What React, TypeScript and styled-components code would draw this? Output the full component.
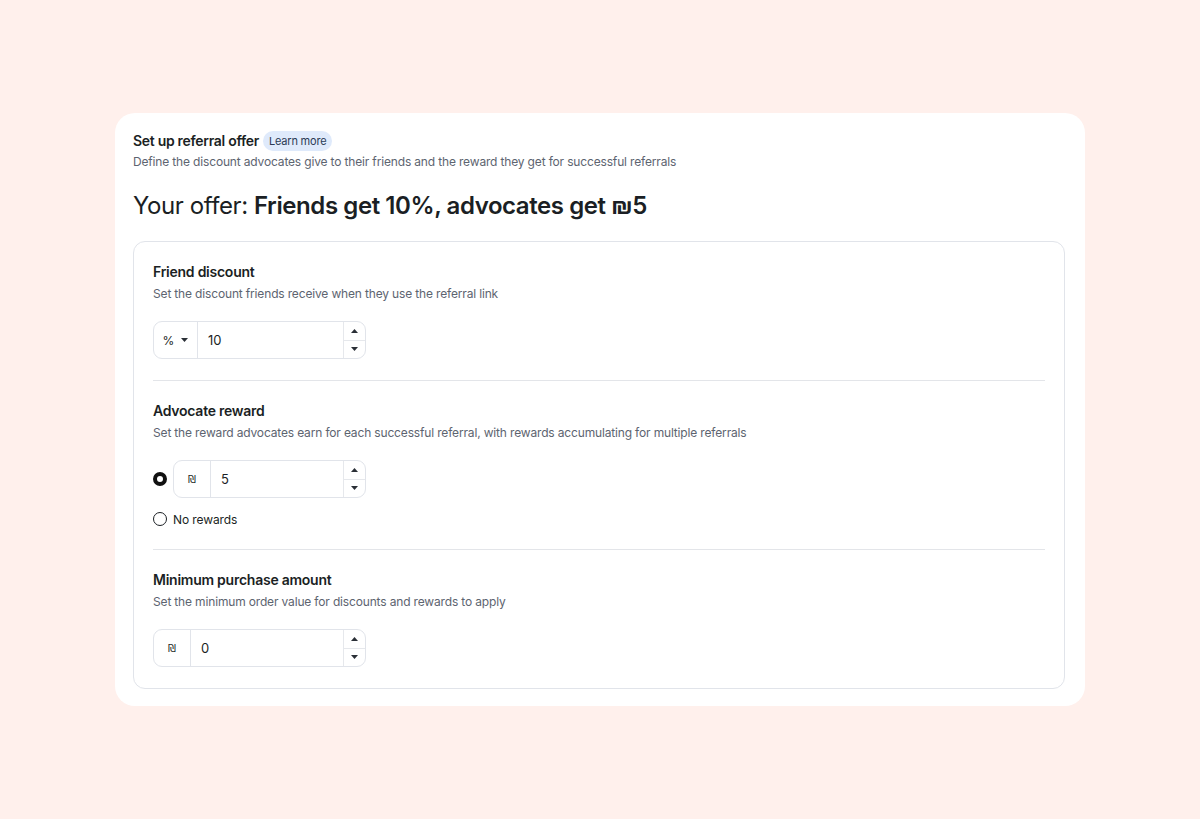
import React from "react";
import styled, { createGlobalStyle } from "styled-components";

const Global = createGlobalStyle`
  html, body { margin: 0; padding: 0; }
  body {
    background: #fff0ec;
    font-family: Inter, "Noto Sans", sans-serif;
    color: #1b1f24;
    -webkit-font-smoothing: antialiased;
  }
`;

const Page = styled.div`
  width: 1200px;
  height: 819px;
  display: flex;
  justify-content: center;
  padding-top: 113px;
  box-sizing: border-box;
`;

const Card = styled.div`
  width: 970px;
  height: 593px;
  box-sizing: border-box;
  background: #fff;
  border-radius: 20px;
  padding: 18px 20px 18px 18px;
  display: flex;
  flex-direction: column;
`;

const TitleRow = styled.div`
  display: flex;
  align-items: center;
  gap: 4px;
  height: 20px;
`;

const Title = styled.div`
  font-size: 14px;
  font-weight: 600;
  line-height: 20px;
  letter-spacing: -0.3px;
  color: #1b1f24;
`;

const Pill = styled.span`
  display: inline-flex;
  align-items: center;
  height: 20px;
  padding: 0 6px;
  border-radius: 10px;
  background: #dfeafb;
  color: #2b3a55;
  font-size: 11px;
  font-weight: 400;
  letter-spacing: -0.2px;
`;

const Desc = styled.div`
  font-size: 12px;
  line-height: 16px;
  letter-spacing: -0.16px;
  color: #5d6470;
  margin-top: 3px;
`;

const Offer = styled.div`
  font-size: 24px;
  line-height: 32px;
  font-weight: 400;
  color: #1b1f24;
  margin-top: 20px;
  letter-spacing: -0.42px;
  b { font-weight: 600; }
`;

const Box = styled.div`
  margin-top: 19px;
  border: 1px solid #e1e4ea;
  border-radius: 12px;
  padding: 20px 19px 21px 19px;
  display: flex;
  flex-direction: column;
`;

const Section = styled.div`
  display: flex;
  flex-direction: column;
`;

const Divider = styled.div`
  height: 1px;
  background: #e3e5e9;
  margin: 21px 0 20px;
`;

const SectionTitle = styled.div`
  font-size: 14px;
  font-weight: 600;
  line-height: 20px;
  letter-spacing: -0.25px;
  color: #1b1f24;
`;

const SectionDesc = styled.div`
  font-size: 12px;
  line-height: 18px;
  letter-spacing: -0.16px;
  color: #5d6470;
  margin-top: 3px;
`;

const FieldRow = styled.div`
  display: flex;
  align-items: center;
  gap: 6px;
  margin-top: 18px;
`;

const Input = styled.div<{ $w: number }>`
  width: ${(p) => p.$w}px;
  height: 38px;
  box-sizing: border-box;
  border: 1px solid #e1e4ea;
  border-radius: 9px;
  display: flex;
  overflow: hidden;
  background: #fff;
`;

const Prefix = styled.div<{ $w: number }>`
  width: ${(p) => p.$w}px;
  flex-shrink: 0;
  border-right: 1px solid #e1e4ea;
  display: flex;
  align-items: center;
  justify-content: center;
  gap: 7px;
  font-size: 12px;
  color: #1b1f24;
`;

const Value = styled.div`
  flex: 1;
  display: flex;
  align-items: center;
  padding-left: 10px;
  font-size: 13px;
  color: #1b1f24;
`;

const Spinner = styled.div`
  width: 21px;
  border-left: 1px solid #e6e8ec;
  display: flex;
  flex-direction: column;
`;

const SpinBtn = styled.div<{ $top?: boolean }>`
  flex: 1;
  display: flex;
  align-items: center;
  justify-content: center;
  ${(p) => (p.$top ? "border-bottom: 1px solid #e6e8ec;" : "")}
`;

const Radio = styled.span<{ $on?: boolean }>`
  width: 14px;
  height: 14px;
  box-sizing: border-box;
  border-radius: 50%;
  border: ${(p) => (p.$on ? "4px solid #111" : "1px solid #1b1f24")};
  flex-shrink: 0;
  background: #fff;
`;

const RadioRow = styled.div`
  display: flex;
  align-items: center;
  gap: 6px;
  height: 18px;
  margin-top: 12px;
  font-size: 12px;
  letter-spacing: -0.1px;
  color: #1b1f24;
`;

const Shekel = styled.span`
  font-family: "DejaVu Sans", "Noto Sans", sans-serif;
  font-size: 10px;
  color: #1b1f24;
`;

const Tri = ({ up }: { up?: boolean }) => (
  <svg width="7" height="4" viewBox="0 0 7 4">
    <path d={up ? "M0 4 L3.5 0 L7 4 Z" : "M0 0 L3.5 4 L7 0 Z"} fill="#2a2f36" />
  </svg>
);

const Spin = () => (
  <Spinner>
    <SpinBtn $top>
      <Tri up />
    </SpinBtn>
    <SpinBtn>
      <Tri />
    </SpinBtn>
  </Spinner>
);

export default function App() {
  return (
    <>
      <Global />
      <Page>
        <Card>
          <TitleRow>
            <Title>Set up referral offer</Title>
            <Pill>Learn more</Pill>
          </TitleRow>
          <Desc>Define the discount advocates give to their friends and the reward they get for successful referrals</Desc>
          <Offer>
            Your offer: <b>Friends get 10%, advocates get ₪5</b>
          </Offer>
          <Box>
            <Section>
              <SectionTitle>Friend discount</SectionTitle>
              <SectionDesc>Set the discount friends receive when they use the referral link</SectionDesc>
              <FieldRow>
                <Input $w={213}>
                  <Prefix $w={43}>
                    <span>%</span>
                    <Tri />
                  </Prefix>
                  <Value>10</Value>
                  <Spin />
                </Input>
              </FieldRow>
            </Section>
            <Divider />
            <Section>
              <SectionTitle>Advocate reward</SectionTitle>
              <SectionDesc>
                Set the reward advocates earn for each successful referral, with rewards accumulating for multiple referrals
              </SectionDesc>
              <FieldRow>
                <Radio $on />
                <Input $w={193}>
                  <Prefix $w={36}>
                    <Shekel>₪</Shekel>
                  </Prefix>
                  <Value>5</Value>
                  <Spin />
                </Input>
              </FieldRow>
              <RadioRow>
                <Radio />
                No rewards
              </RadioRow>
            </Section>
            <Divider />
            <Section>
              <SectionTitle>Minimum purchase amount</SectionTitle>
              <SectionDesc>Set the minimum order value for discounts and rewards to apply</SectionDesc>
              <FieldRow>
                <Input $w={213}>
                  <Prefix $w={36}>
                    <Shekel>₪</Shekel>
                  </Prefix>
                  <Value>0</Value>
                  <Spin />
                </Input>
              </FieldRow>
            </Section>
          </Box>
        </Card>
      </Page>
    </>
  );
}
